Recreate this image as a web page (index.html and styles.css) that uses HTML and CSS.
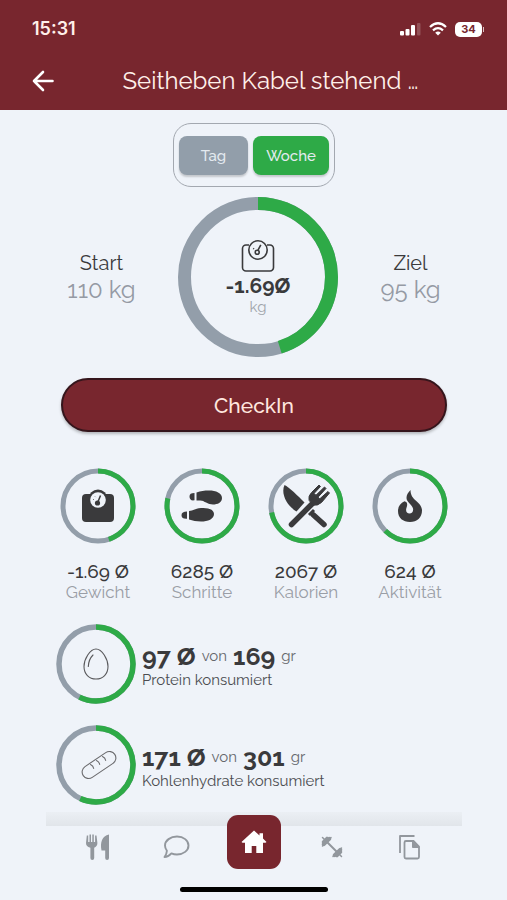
FILE: index.html
```html
<!DOCTYPE html>
<html lang="de">
<head>
<meta charset="utf-8">
<meta name="viewport" content="width=device-width, initial-scale=1">
<title>CheckIn</title>
<link rel="stylesheet" href="styles.css">
</head>
<body>
<header class="header">
  <div class="status">
    <span class="clock">15:31</span>
    <div class="status-icons">
      <svg width="21" height="14" viewBox="0 0 21 14" fill="#fff"><rect x="0" y="9" width="4" height="4.500" rx="1"/><rect x="5.500" y="7" width="4" height="6.500" rx="1"/><rect x="11" y="3" width="4" height="10.500" rx="1"/><rect x="17" y="1" width="3.500" height="12.500" rx="1" opacity=".2"/></svg>
      <svg width="18" height="14" viewBox="0 0 18 14" fill="none" stroke="#fff" stroke-width="2.300"><path d="M1 5Q9-2.400 17 5M4 8.300q5-4.300 10 0"/><path d="M9 13.600L6.200 10.700q2.800-2.200 5.600 0z" fill="#fff" stroke="none"/></svg>
      <span class="battery">34</span>
    </div>
  </div>
  <div class="titlebar">
    <button class="back" aria-label="Zurück"><svg width="22" height="22" viewBox="0 0 22 22" fill="none" stroke="#fff" stroke-width="2.600" stroke-linecap="round" stroke-linejoin="round"><path d="M20.500 11H2M11 2L2 11l9 9"/></svg></button>
    <h1 class="title">Seitheben Kabel stehend …</h1>
  </div>
</header>

<main class="main">
  <div class="toggle">
    <button class="toggle-btn">Tag</button>
    <button class="toggle-btn active">Woche</button>
  </div>

  <section class="goal">
    <div class="goal-side"><span class="goal-name">Start</span><span class="goal-value">110 kg</span></div>
    <div class="ring ring-large">
      <svg class="ring-track" viewBox="0 0 160 160"><circle class="rest" cx="80" cy="80" r="73.500" stroke-width="13"/><circle class="done" cx="80" cy="80" r="73.500" stroke-width="13" pathLength="100" stroke-dasharray="45.200 100" transform="rotate(-90 80 80)"/></svg>
      <div class="ring-content">
        <svg width="34" height="34" viewBox="0 0 34 34" fill="none" stroke="#3a3a3c" stroke-width="1.600"><path d="M8 6H5a3.500 3.500 0 0 0-3.500 3.500v19A3.500 3.500 0 0 0 5 32h24a3.500 3.500 0 0 0 3.500-3.500v-19A3.500 3.500 0 0 0 29 6h-3"/><circle cx="17" cy="11" r="9.200"/><circle cx="16.200" cy="13.200" r="2"/><path d="M17 11.200l2.800-5.400M13 10l-.8-.7"/></svg>
        <strong class="ring-value">-1.69Ø</strong>
        <span class="ring-unit">kg</span>
      </div>
    </div>
    <div class="goal-side"><span class="goal-name">Ziel</span><span class="goal-value">95 kg</span></div>
  </section>

  <button class="checkin">CheckIn</button>

  <section class="stats">
    <div class="stat">
      <div class="ring ring-small">
        <svg class="ring-track" viewBox="0 0 76 76"><circle class="rest" cx="38" cy="38" r="35" stroke-width="5"/><circle class="done" cx="38" cy="38" r="35" stroke-width="5" pathLength="100" stroke-dasharray="45 100" transform="rotate(-90 38 38)"/></svg>
        <div class="ring-content"><svg width="34" height="34" viewBox="0 0 34 34"><rect x="1" y="5" width="32" height="28" rx="4" fill="#3a3a3c"/><circle cx="17" cy="10" r="9.500" fill="#3a3a3c"/><circle cx="17" cy="11" r="7.800" fill="#eff3f9"/><circle cx="16.500" cy="14" r="2.600" fill="#3a3a3c"/><path d="M16.500 14l3-7.500" stroke="#3a3a3c" stroke-width="1.500"/><path d="M12 10.500h1M14 7.500l.6.600" stroke="#777"/></svg></div>
      </div>
      <span class="stat-value">-1.69 Ø</span><span class="stat-name">Gewicht</span>
    </div>
    <div class="stat">
      <div class="ring ring-small">
        <svg class="ring-track" viewBox="0 0 76 76"><circle class="rest" cx="38" cy="38" r="35" stroke-width="5"/><circle class="done" cx="38" cy="38" r="35" stroke-width="5" pathLength="100" stroke-dasharray="78.500 100" transform="rotate(-90 38 38)"/></svg>
        <div class="ring-content"><svg width="42" height="34" viewBox="0 0 42 34" fill="#3a3a3c"><path d="M15.500 3.500C20 2 23 1.500 28 1.500c7 0 13 2.500 13 7.500 0 4.500-4.500 6.500-9 6.500-5 0-8-3-11-3.700-2-.4-3.500-.4-5.500-.3zM13.500 4v7.300C10 12 8.500 10 8.500 7.500S10 4 13.500 4zM8 22c4-.500 7-2.500 12-3 7-.600 13 1.500 13 6 0 5-6 7.500-13 7.500-5 0-8-1-12-2zM6 22.500v7.300C2.500 30 .5 29 .5 26.300S2.500 22.500 6 22.500z"/></svg></div>
      </div>
      <span class="stat-value">6285 Ø</span><span class="stat-name">Schritte</span>
    </div>
    <div class="stat">
      <div class="ring ring-small">
        <svg class="ring-track" viewBox="0 0 76 76"><circle class="rest" cx="38" cy="38" r="35" stroke-width="5"/><circle class="done" cx="38" cy="38" r="35" stroke-width="5" pathLength="100" stroke-dasharray="72 100" transform="rotate(-90 38 38)"/></svg>
        <div class="ring-content"><svg width="50" height="46" viewBox="0 0 50 46" fill="none" stroke="#3a3a3c" stroke-linecap="round"><path d="M3.500 2C8 4 17 13 23.500 19.500L15.500 28.500C6 23-.5 11 3.500 2z" fill="#3a3a3c" stroke="none"/><path d="M32.500 32L43 41.500" stroke-width="5.500"/><path d="M28 32l5-5" stroke="#3a3a3c" stroke-width="3" stroke-linecap="butt"/><path d="M10.500 41.500L32 20" stroke-width="5.500"/><path d="M28 17q-1-4 2.500-7.500L38 2l1.500 1.500-6.500 7 2 1.700L43.500 4l1.500 1.500-8 8.700 1.800 1.600L47 8.500 48.500 10l-8 9.500q-4 3.700-8.500 2.500z" fill="#3a3a3c" stroke-width="1"/></svg></div>
      </div>
      <span class="stat-value">2067 Ø</span><span class="stat-name">Kalorien</span>
    </div>
    <div class="stat">
      <div class="ring ring-small">
        <svg class="ring-track" viewBox="0 0 76 76"><circle class="rest" cx="38" cy="38" r="35" stroke-width="5"/><circle class="done" cx="38" cy="38" r="35" stroke-width="5" pathLength="100" stroke-dasharray="62.500 100" transform="rotate(-90 38 38)"/></svg>
        <div class="ring-content"><svg width="26" height="34" viewBox="0 0 26 34"><path d="M13.500 1C11 3.500 9.500 6 9.500 9c0 4 5.500 6.500 6.500 10.500.6 3-1 5-3.500 5s-3.800-2-3.300-4.500c.2-1.500 1-2.500 1-4.500 0-1.700-1-2.800-2.700-3.200C3.500 14 1 17.500 1 22c0 7 5 11 12 11s12-4.500 12-11.500c0-4.500-3-7-6-9.800-3-2.700-5.500-5.200-5.500-10.700z" fill="#3a3a3c"/></svg></div>
      </div>
      <span class="stat-value">624 Ø</span><span class="stat-name">Aktivität</span>
    </div>
  </section>

  <section class="macros">
    <div class="macro">
      <div class="ring ring-medium">
        <svg class="ring-track" viewBox="0 0 80 80"><circle class="rest" cx="40" cy="40" r="37" stroke-width="5.500"/><circle class="done" cx="40" cy="40" r="37" stroke-width="5.500" pathLength="100" stroke-dasharray="57.400 100" transform="rotate(-90 40 40)"/></svg>
        <div class="ring-content"><svg width="26" height="32" viewBox="0 0 26 32" fill="none" stroke="#5a5a5d" stroke-width="1.100" stroke-linecap="round"><path d="M13 1C19 1 25 11 25 18.500S20 31 13 31 1 26 1 18.500 7 1 13 1zM10 7c-3 3-4.500 7-4.700 11.500"/></svg></div>
      </div>
      <div class="macro-text">
        <p class="macro-line"><strong>97 Ø</strong> <span>von</span> <strong>169</strong> <span>gr</span></p>
        <p class="macro-name">Protein konsumiert</p>
      </div>
    </div>
    <div class="macro">
      <div class="ring ring-medium">
        <svg class="ring-track" viewBox="0 0 80 80"><circle class="rest" cx="40" cy="40" r="37" stroke-width="5.500"/><circle class="done" cx="40" cy="40" r="37" stroke-width="5.500" pathLength="100" stroke-dasharray="57 100" transform="rotate(-90 40 40)"/></svg>
        <div class="ring-content bread"><svg width="36" height="30" viewBox="0 0 36 30" fill="none" stroke="#6a6a6d" stroke-width="1.100" stroke-linecap="round"><rect x="-1" y="8.500" width="38" height="13" rx="6.500" transform="rotate(-34 18 15)"/><path d="M9.500 14.500q2.800 1.300 3.200 4M15.500 10.500q2.800 1.300 3.200 4M21.500 6.500q2.800 1.300 3.200 4"/></svg></div>
      </div>
      <div class="macro-text">
        <p class="macro-line"><strong>171 Ø</strong> <span>von</span> <strong>301</strong> <span>gr</span></p>
        <p class="macro-name">Kohlenhydrate konsumiert</p>
      </div>
    </div>
  </section>
</main>

<footer class="footer">
  <nav class="nav">
    <a href="#" aria-label="Ernährung"><svg width="24" height="26" viewBox="0 0 24 26" fill="#92979d"><path d="M.8 1.500h1.400V8h1.300V.5h1.500V8h1.300V.5h1.500V8h1.300V1.500h1.400l.9 7.500c0 2.500-1.400 4-3.200 4.700V24a1.900 1.900 0 0 1-3.800 0V13.700C1.400 13 0 11.500 0 9zM23 .5V24a1.900 1.900 0 0 1-3.800 0v-7.500h-3.700c-1.500-8 .5-14.500 7.500-16z"/></svg></a>
    <a href="#" aria-label="Chat"><svg width="27" height="24" viewBox="0 0 27 24" fill="none" stroke="#92979d" stroke-width="1.900" stroke-linejoin="round"><path d="M14 1.500c6.500 0 11.500 4 11.500 9s-5 9-11.500 9c-2 0-4-.4-5.600-1.100C6.500 20.500 4 22 1.500 22 3 20 3.800 18.400 3.900 15.800 2.800 14.300 2 12.500 2 10.500c0-5 5.500-9 12-9z"/></svg></a>
    <a href="#" class="home" aria-label="Start"><svg width="26" height="24" viewBox="0 0 26 24" fill="#fff"><path d="M13 .5l5.500 5V3.200H22v5.400l3.500 3.400-1 .800H22V23h-6.700v-7h-4.600v7H4V12.800H1.500l-1-.800z"/></svg></a>
    <a href="#" aria-label="Training"><svg width="22" height="22" viewBox="0 0 22 22" fill="none" stroke="#92979d" stroke-linecap="round"><path d="M4 4L18 18" stroke-width="2"/><path d="M2.800 8.200L8.200 2.800M19.200 13.800L13.800 19.200" stroke-width="4"/><path d="M2 6L6 2M20 16L16 20" stroke-width="2.600"/><path d="M1.500 1.500l2 2M18.500 18.500l2 2M1.500 10l2-2M8 3.500L10 1.500M20.500 12l-2 2M14 18.500l-2 2" stroke-width="1.500"/></svg></a>
    <a href="#" aria-label="Dokumente"><svg width="22" height="25" viewBox="0 0 22 25" fill="none" stroke="#92979d" stroke-width="1.800"><path d="M1 18V1h14.500" stroke-linejoin="round"/><path d="M7 6h7.500L20 11.500V22a1.500 1.500 0 0 1-1.500 1.500H7A1.500 1.500 0 0 1 5.500 22V7.500A1.500 1.500 0 0 1 7 6z"/><path d="M13.500 6v6.500H20z" fill="#92979d" stroke-width="1"/></svg></a>
  </nav>
  <div class="home-indicator"></div>
</footer>
</body>
</html>
```
FILE: styles.css
```css
* { box-sizing: border-box; }

body {
  margin: 0;
  min-height: 100vh;
  display: flex;
  flex-direction: column;
  background: #eff3f9;
  color: #3a3a3c;
  font-family: Raleway, Lato, sans-serif;
}

button {
  font-family: inherit;
  font-weight: 500;
  padding: 0;
  border: 0;
  cursor: pointer;
}

svg { display: block; }

h1, p { margin: 0; }

.header {
  height: 110px;
  padding: 16px 24px 0 32px;
  background: #78262e;
  color: #fff0ea;
}

.status {
  display: flex;
  justify-content: space-between;
  align-items: center;
  height: 26px;
}

.clock {
  font: 600 18px/26px Inter, sans-serif;
}

.status-icons {
  display: flex;
  align-items: center;
  gap: 8px;
}

.battery {
  position: relative;
  width: 27px;
  height: 15px;
  margin-right: 1px;
  border-radius: 5px;
  background: #fff;
  color: #78262e;
  font: 700 11px/15px Inter, sans-serif;
  text-align: center;
}

.battery::after {
  content: "";
  position: absolute;
  left: 28px;
  top: 5px;
  width: 1px;
  height: 5px;
  background: #d9c0c2;
}

.titlebar {
  display: grid;
  grid-template-columns: 24px 1fr;
  align-items: center;
  height: 32px;
  margin-top: 23px;
}

.back { background: none; }

.title {
  padding-left: 2px;
  font-size: 24px;
  font-weight: 400;
  line-height: 32px;
  text-align: center;
}

.main {
  flex: 1;
  display: flex;
  flex-direction: column;
  padding: 13px 45px 0 46px;
}

.toggle {
  display: flex;
  align-self: center;
  gap: 5px;
  padding: 12px 5px 11px;
  border: 1px solid #a3a8b0;
  border-radius: 18px;
}

.toggle-btn {
  width: 69px;
  height: 39px;
  border-radius: 8px;
  background: #929eaa;
  color: #e4eaf0;
  font-size: 15px;
  box-shadow: 0 2px 2px rgba(0, 0, 0, .18);
}

.toggle-btn.active {
  width: 76px;
  background: #2eaa47;
}

.goal {
  display: grid;
  grid-template-columns: 111px 1fr 103px;
  align-items: center;
  justify-items: center;
  margin-top: 10px;
}

.goal-side {
  display: flex;
  flex-direction: column;
  align-items: center;
}

.goal-name {
  font-size: 20px;
  line-height: 26px;
}

.goal-value {
  color: #959aa4;
  font-size: 24px;
  line-height: 28px;
}

.ring { display: grid; }

.ring-large { width: 160px; height: 160px; }
.ring-medium { width: 80px; height: 80px; }
.ring-small { width: 76px; height: 76px; }

.ring > * { grid-area: 1 / 1; }

.ring-track {
  width: 100%;
  height: 100%;
  fill: none;
}

.rest { stroke: #939eaa; }
.done { stroke: #2eaa47; }

.ring-content {
  display: flex;
  flex-direction: column;
  align-items: center;
  justify-content: center;
}

.bread { padding-left: 6px; }

.ring-value {
  font-size: 21px;
  line-height: 25px;
}

.ring-unit {
  color: #a0a4ab;
  font-size: 15px;
  line-height: 18px;
}

.checkin {
  height: 54px;
  margin: 21px 15px 0;
  border: 2px solid #35151c;
  border-radius: 27px;
  background: #78262e;
  color: #ffe6df;
  font-size: 21px;
  box-shadow: 0 2px 3px rgba(0, 0, 0, .25);
}

.stats {
  display: grid;
  grid-template-columns: repeat(4, 1fr);
  margin-top: 36px;
}

.stat {
  display: flex;
  flex-direction: column;
  align-items: center;
}

.stat-value {
  margin-top: 16px;
  font-size: 19px;
  font-weight: 500;
  line-height: 22px;
}

.stat-name {
  color: #9a9ea6;
  font-size: 17px;
  line-height: 20px;
}

.macros {
  display: flex;
  flex-direction: column;
  gap: 21px;
  margin-top: 22px;
  padding-left: 10px;
}

.macro {
  display: flex;
  align-items: center;
  gap: 6px;
}

.macro-text { padding-top: 1px; }

.macro-line {
  display: flex;
  gap: 6px;
  line-height: 30px;
}

.macro-line strong { font-size: 25px; }

.macro-line span {
  color: #65676c;
  font-size: 15px;
}

.macro-name {
  color: #4c4d51;
  font-size: 15px;
  line-height: 18px;
}

.footer {
  display: flex;
  flex-direction: column;
  align-items: center;
  padding: 0 45px 8px 46px;
}

.footer::before {
  content: "";
  align-self: stretch;
  height: 14px;
  background: linear-gradient(#ebeff4, #e1e5ea);
}

.nav {
  align-self: stretch;
  display: grid;
  grid-template-columns: repeat(5, 1fr);
  justify-items: center;
  align-items: center;
  height: 54px;
  margin: -11px 13px 0;
}

.nav a {
  display: grid;
  place-items: center;
  margin-top: 10px;
}

.nav .home {
  width: 54px;
  height: 54px;
  margin-top: 0;
  border-radius: 11px;
  background: #78262e;
}

.home-indicator {
  width: 148px;
  height: 5px;
  margin-top: 18px;
  border-radius: 3px;
  background: #000;
}
```
